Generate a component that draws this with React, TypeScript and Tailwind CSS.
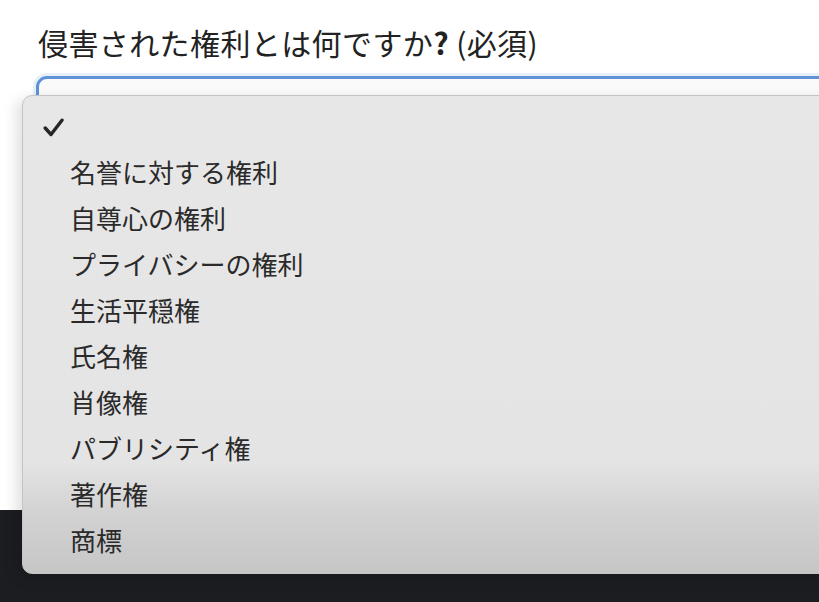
const options = [
  "名誉に対する権利",
  "自尊心の権利",
  "プライバシーの権利",
  "生活平穏権",
  "氏名権",
  "肖像権",
  "パブリシティ権",
  "著作権",
  "商標",
]

const font = { fontFamily: '"Noto Sans CJK JP", "Noto Sans", sans-serif' }

function Check() {
  return (
    <svg width="21" height="19" viewBox="0 0 21 19" className="block">
      <path d="M2.2 10 L8 16.5 L19 2.2" fill="none" stroke="#262626" strokeWidth="3.4" strokeLinecap="round" strokeLinejoin="round" />
    </svg>
  )
}

export default function App() {
  return (
    <div className="relative w-[819px] h-[602px] overflow-hidden bg-white flex flex-col" style={font}>
      <div className="h-[510px] shrink-0 bg-white pt-[22px] pl-[36px]">
        <h1 className="pl-[2px] text-[30px] leading-[40px] text-[#222] tracking-[0.4px]">
          侵害された権利とは何ですか<span className="font-bold">?</span> (必須)
        </h1>
        <div className="mt-[14px] h-[56px] w-[900px] rounded-[11px] border-[3px] border-[#5f93d6] bg-[#fafafa] shadow-[0_0_0_3px_rgba(95,147,214,0.15)]" />
      </div>
      <div className="flex-1 bg-[#1b1d20]" />

      <div className="absolute left-[22px] top-[95px] w-[840px] h-[479px] rounded-[10px] border border-[#c4c4c4] bg-[linear-gradient(to_bottom,#e7e7e7_0%,#e4e4e4_77%,#d3d3d3_87%,#c6c6c6_100%)] shadow-[-6px_4px_14px_rgba(0,0,0,0.12)] pt-[8px]">
        <div className="h-[46px] flex items-center pl-[20px]">
          <Check />
        </div>
        {options.map((o) => (
          <div key={o} className="h-[46px] flex items-center pl-[47px] pb-[3px] text-[26px] text-[#2a2a2a]">
            {o}
          </div>
        ))}
      </div>
    </div>
  )
}
